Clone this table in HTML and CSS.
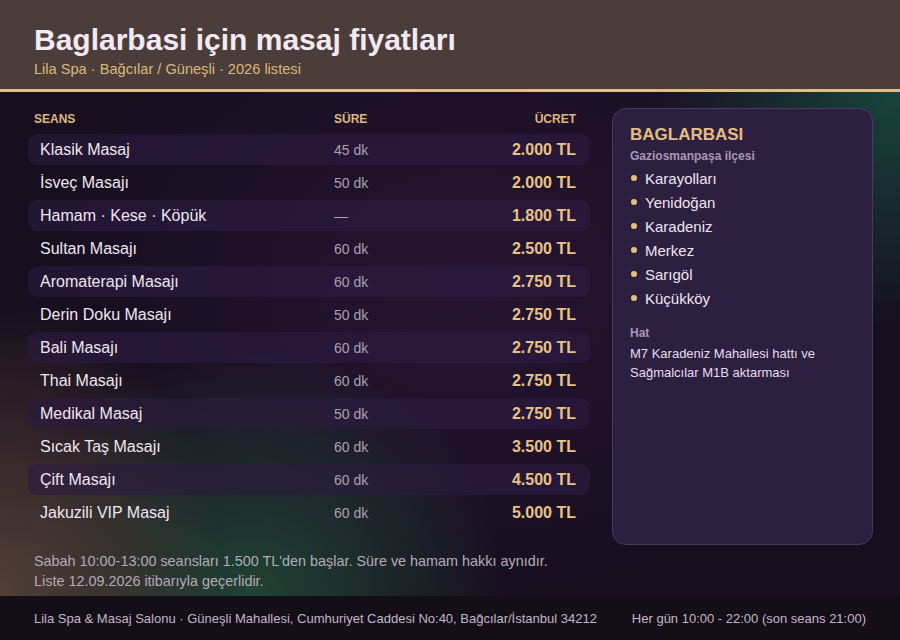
FILE: index.html
```html
<!DOCTYPE html>
<html lang="tr">
<head>
<meta charset="utf-8">
<title>Baglarbasi için masaj fiyatları</title>
<link rel="stylesheet" href="styles.css">
</head>
<body>
<div class="page">
  <header class="top">
    <h1 class="title">Baglarbasi için masaj fiyatları</h1>
    <div class="subtitle">Lila Spa · Bağcılar / Güneşli · 2026 listesi</div>
  </header>
  <main class="main">
    <section class="prices">
      <div class="thead">
        <span>Seans</span>
        <span>Süre</span>
        <span class="r">Ücret</span>
      </div>
      <div class="rows">
        <div class="row alt"><span class="name">Klasik Masaj</span><span class="dur">45 dk</span><span class="price">2.000 TL</span></div>
        <div class="row"><span class="name">İsveç Masajı</span><span class="dur">50 dk</span><span class="price">2.000 TL</span></div>
        <div class="row alt"><span class="name">Hamam · Kese · Köpük</span><span class="dur">—</span><span class="price">1.800 TL</span></div>
        <div class="row"><span class="name">Sultan Masajı</span><span class="dur">60 dk</span><span class="price">2.500 TL</span></div>
        <div class="row alt"><span class="name">Aromaterapi Masajı</span><span class="dur">60 dk</span><span class="price">2.750 TL</span></div>
        <div class="row"><span class="name">Derin Doku Masajı</span><span class="dur">50 dk</span><span class="price">2.750 TL</span></div>
        <div class="row alt"><span class="name">Bali Masajı</span><span class="dur">60 dk</span><span class="price">2.750 TL</span></div>
        <div class="row"><span class="name">Thai Masajı</span><span class="dur">60 dk</span><span class="price">2.750 TL</span></div>
        <div class="row alt"><span class="name">Medikal Masaj</span><span class="dur">50 dk</span><span class="price">2.750 TL</span></div>
        <div class="row"><span class="name">Sıcak Taş Masajı</span><span class="dur">60 dk</span><span class="price">3.500 TL</span></div>
        <div class="row alt"><span class="name">Çift Masajı</span><span class="dur">60 dk</span><span class="price">4.500 TL</span></div>
        <div class="row"><span class="name">Jakuzili VIP Masaj</span><span class="dur">60 dk</span><span class="price">5.000 TL</span></div>
      </div>
      <p class="note">Sabah 10:00-13:00 seansları 1.500 TL'den başlar. Süre ve hamam hakkı aynıdır.<br>Liste 12.09.2026 itibarıyla geçerlidir.</p>
    </section>
    <aside class="card">
      <h2 class="card-title">BAGLARBASI</h2>
      <div class="card-sub">Gaziosmanpaşa ilçesi</div>
      <ul class="areas">
        <li>Karayolları</li>
        <li>Yenidoğan</li>
        <li>Karadeniz</li>
        <li>Merkez</li>
        <li>Sarıgöl</li>
        <li>Küçükköy</li>
      </ul>
      <div class="card-label">Hat</div>
      <p class="card-text">M7 Karadeniz Mahallesi hattı ve Sağmalcılar M1B aktarması</p>
    </aside>
  </main>
  <footer class="foot">
    <span>Lila Spa &amp; Masaj Salonu · Güneşli Mahallesi, Cumhuriyet Caddesi No:40, Bağcılar/İstanbul 34212</span>
    <span>Her gün 10:00 - 22:00 (son seans 21:00)</span>
  </footer>
</div>
</body>
</html>
```
FILE: styles.css
```css
* { box-sizing: border-box; }
html, body { margin: 0; padding: 0; }
body {
  width: 900px;
  height: 640px;
  overflow: hidden;
  font-family: "Liberation Sans", Arial, sans-serif;
  background: #140e19;
}
.page {
  display: flex;
  flex-direction: column;
  height: 640px;
}
.top {
  height: 92px;
  background: #4b3d39;
  border-bottom: 3px solid #e2be84;
  padding: 23px 34px 0;
}
.title {
  margin: 0;
  font-size: 30px;
  line-height: 34px;
  font-weight: bold;
  color: #f3e9f3;
}
.subtitle {
  margin-top: 3px;
  font-size: 14.6px;
  line-height: 18px;
  color: #dcb87c;
}
.main {
  flex: 1;
  display: grid;
  grid-template-columns: 562px 261px;
  column-gap: 22px;
  padding: 16px 27px 0 28px;
  background:
    radial-gradient(ellipse 300px 400px at 0% 100%, rgba(92,72,60,0.85), transparent 75%),
    radial-gradient(ellipse 340px 330px at 28% 100%, rgba(34,76,56,0.85), transparent 75%),
    radial-gradient(ellipse 320px 300px at 100% 0%, rgba(24,74,64,0.9), transparent 80%),
    radial-gradient(ellipse 420px 320px at 52% 38%, rgba(58,28,78,0.45), transparent),
    #170e1e;
}
.prices { display: flex; flex-direction: column; }
.thead {
  display: grid;
  grid-template-columns: 300px 1fr auto;
  padding: 1px 14px 0 6px;
  font-size: 12px;
  line-height: 20px;
  font-weight: bold;
  text-transform: uppercase;
  color: #dcb87c;
}
.thead .r { text-align: right; }
.rows {
  margin-top: 5px;
  display: flex;
  flex-direction: column;
  gap: 2px;
}
.row {
  display: grid;
  grid-template-columns: 294px 1fr auto;
  align-items: center;
  height: 31px;
  padding: 0 14px 0 12px;
  border-radius: 9px;
}
.row.alt { background: rgba(44, 28, 64, 0.62); }
.name { font-size: 16px; color: #efe6f1; }
.dur { font-size: 14px; color: #a9a0b1; }
.price { font-size: 16px; font-weight: bold; color: #e8c384; text-align: right; }
.note {
  margin: 23px 0 0 6px;
  font-size: 14.4px;
  line-height: 20px;
  color: #b4aab7;
}
.card {
  height: 437px;
  background: #2d1f40;
  border: 1px solid #4a3a5e;
  border-radius: 14px;
  padding: 15px 17px;
}
.card-title {
  margin: 0;
  font-size: 17px;
  line-height: 22px;
  font-weight: bold;
  color: #e3bd7f;
}
.card-sub {
  margin-top: 2px;
  font-size: 12px;
  line-height: 16px;
  font-weight: bold;
  color: #a898b6;
}
.areas {
  list-style: none;
  margin: 2px 0 0;
  padding: 0;
}
.areas li {
  display: flex;
  align-items: center;
  gap: 8px;
  height: 24px;
  font-size: 15px;
  color: #efe6f1;
}
.areas li::before {
  content: "";
  width: 6px;
  height: 6px;
  border-radius: 50%;
  background: #e3bd7f;
  margin-left: 1px;
}
.card-label {
  margin-top: 15px;
  font-size: 12px;
  line-height: 16px;
  font-weight: bold;
  color: #a898b6;
}
.card-text {
  margin: 3px 0 0;
  font-size: 13px;
  line-height: 19px;
  color: #e6dcec;
}
.foot {
  height: 44px;
  display: flex;
  align-items: center;
  justify-content: space-between;
  padding: 0 34px;
  background: #140e19;
  font-size: 13px;
  color: #c1b8c6;
}
```
